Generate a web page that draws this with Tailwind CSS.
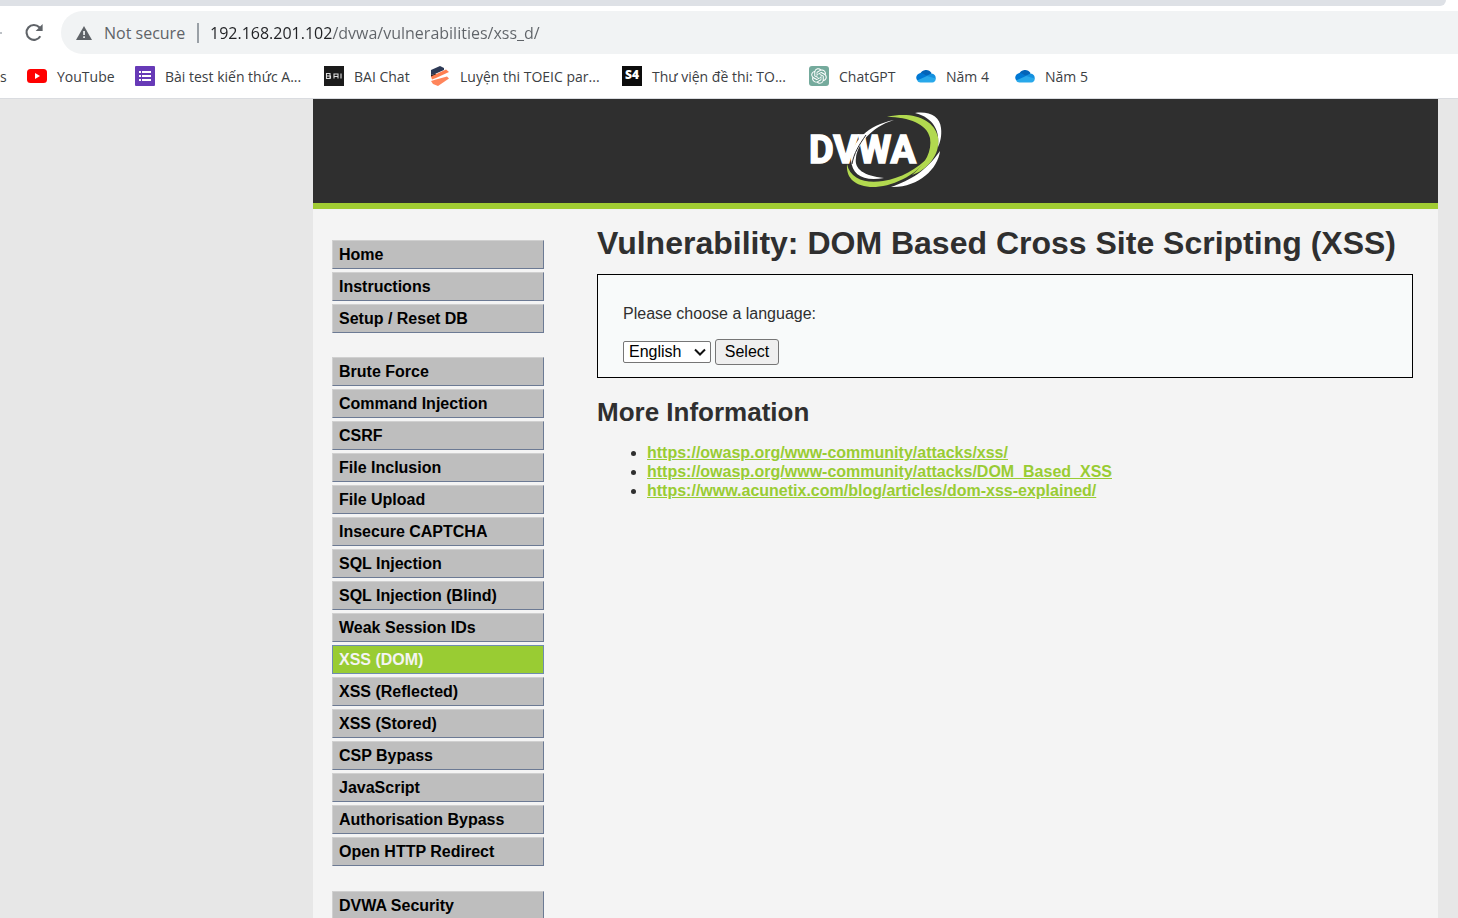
<!DOCTYPE html>
<html lang="en">
<head>
<meta charset="utf-8">
<title>Vulnerability: DOM Based Cross Site Scripting (XSS)</title>
<script src="https://cdn.jsdelivr.net/npm/@tailwindcss/browser@4"></script>
</head>
<body class="flex h-screen flex-col overflow-hidden bg-[#e7e7e7] font-['Liberation_Sans',Arial,sans-serif] text-base text-[#2f2f2f]">

<!-- Browser toolbar -->
<div class="shrink-0 border-b border-[#dadce0] bg-white font-['Open_Sans','Noto_Sans',sans-serif]">
  <div class="mr-3 h-[6px] rounded-br-lg bg-[#dee1e6]"></div>
  <div class="mt-[5px] flex h-[43px] items-center">
    <div class="flex w-[61px] shrink-0 items-center">
      <span class="h-[2px] w-[2px] bg-[#bdc1c6]"></span>
      <button aria-label="Reload" class="ml-[20px] h-6 w-6">
        <svg viewBox="0 0 24 24" class="h-6 w-6"><path d="M18.3 15.2A7.4 7.4 0 1 1 17.3 6.3L19 8" fill="none" stroke="#5f6368" stroke-width="2.1"/><path d="M20.6 3.1V10h-7z" fill="#5f6368"/></svg>
      </button>
    </div>
    <div class="flex h-full flex-1 items-center rounded-l-full bg-[#f1f3f4] pl-[15px]">
      <svg viewBox="0 0 16 14" class="h-[14px] w-4 shrink-0"><path d="M8 0L16 14H0Z" fill="#5f6368"/><path d="M7.2 5h1.7v4H7.2zM7.2 10.300h1.700v1.700H7.200z" fill="#f1f3f4"/></svg>
      <span class="ml-[12px] w-[84px] shrink-0 whitespace-nowrap text-[16px] text-[#5f6368]">Not secure</span>
      <span class="ml-[9px] h-5 w-[2px] shrink-0 bg-[#9aa0a6]"></span>
      <input aria-label="Address" type="text" value="192.168.201.102/dvwa/vulnerabilities/xss_d/" class="ml-[11px] h-8 min-w-0 flex-1 bg-[linear-gradient(90deg,#202124_123px,#5f6368_123px)] bg-clip-text text-[16px] text-transparent outline-none">
    </div>
  </div>
  <nav aria-label="Bookmarks" class="grid h-[44px] grid-cols-[27px_108px_189px_106px_192px_187px_107px_99px_auto] items-center whitespace-nowrap text-[14px] text-[#3c4043]">
    <a href="#">s</a>
    <a href="#" class="flex items-center gap-[10px]"><svg viewBox="0 0 20 20" class="h-5 w-5"><rect y="3" width="20" height="14" rx="3.500" fill="#f00"/><path d="M8 7v6l5-3z" fill="#fff"/></svg>YouTube</a>
    <a href="#" class="flex items-center gap-[10px]"><svg viewBox="0 0 20 20" class="h-5 w-5"><rect width="20" height="20" rx="1" fill="#673ab7"/><path d="M4 5h2v2H4zM7 5h9v2H7zM4 9h2v2H4zM7 9h9v2H7zM4 13h2v2H4zM7 13h9v2H7z" fill="#fff"/></svg>Bài test kiến thức A...</a>
    <a href="#" class="flex items-center gap-[10px]"><svg viewBox="0 0 20 20" class="h-5 w-5"><rect width="20" height="20" fill="#1b1b1b"/><path d="M2.500 7.500h3.500v5H2.500zM2.500 10h4v2.500M10 12.500v-4.500h4v4.500M10 10.500h4M17 7.500v5" fill="none" stroke="#ddd" stroke-width="1.100"/></svg>BAI Chat</a>
    <a href="#" class="flex items-center gap-[10px]"><svg viewBox="0 0 20 20" class="h-5 w-5"><path d="M1 4L10 0L14 2V4L6 7.500L1 9Z" fill="#2d3a56"/><path d="M1 9L6 7.500V10L1 11Z" fill="#26202b"/><path d="M1 10.500L16 3.500L19 6L6 12L2 13.500Z" fill="#ff7f50"/><path d="M1 15L6 13.500L17 10.500L19 12.500L8 20L3 18Z" fill="#ff855b"/></svg>Luyện thi TOEIC par...</a>
    <a href="#" class="flex items-center gap-[10px]"><svg viewBox="0 0 20 20" class="h-5 w-5"><rect width="20" height="20" fill="#0c0c0c"/><text x="10" y="13" text-anchor="middle" font-family="Open Sans" font-weight="800" font-size="12" fill="#fff">S4</text></svg>Thư viện đề thi: TO...</a>
    <a href="#" class="flex items-center gap-[10px]"><svg viewBox="0 0 20 20" class="h-5 w-5"><rect width="20" height="20" rx="3" fill="#74aa9c"/><path transform="translate(2.200 2.200) scale(.65)" fill="#fff" d="M22.282 9.821a5.985 5.985 0 0 0-.516-4.910 6.046 6.046 0 0 0-6.510-2.900A6.065 6.065 0 0 0 4.981 4.182a5.985 5.985 0 0 0-3.998 2.900 6.046 6.046 0 0 0 .743 7.097 5.980 5.980 0 0 0 .511 4.911 6.051 6.051 0 0 0 6.515 2.900A5.985 5.985 0 0 0 13.260 24a6.056 6.056 0 0 0 5.772-4.206 5.990 5.990 0 0 0 3.998-2.900 6.056 6.056 0 0 0-.748-7.073zM13.260 22.430a4.476 4.476 0 0 1-2.876-1.041l.141-.081 4.779-2.758a.795.795 0 0 0 .393-.681v-6.737l2.020 1.169a.071.071 0 0 1 .038.052v5.583a4.504 4.504 0 0 1-4.495 4.494zM3.600 18.304a4.471 4.471 0 0 1-.535-3.014l.142.085 4.783 2.759a.771.771 0 0 0 .781 0l5.843-3.369v2.332a.080.080 0 0 1-.033.062L9.740 19.950a4.499 4.499 0 0 1-6.140-1.646zM2.341 7.896a4.485 4.485 0 0 1 2.366-1.973V11.600a.766.766 0 0 0 .388.677l5.815 3.354-2.020 1.169a.076.076 0 0 1-.071 0l-4.830-2.787A4.504 4.504 0 0 1 2.341 7.896zm16.597 3.856l-5.833-3.387L15.119 7.200a.076.076 0 0 1 .071 0l4.830 2.791a4.494 4.494 0 0 1-.676 8.105v-5.678a.790.790 0 0 0-.406-.666zm2.010-3.023l-.141-.085-4.774-2.782a.776.776 0 0 0-.785 0L9.409 9.230V6.897a.066.066 0 0 1 .028-.061l4.830-2.787a4.499 4.499 0 0 1 6.681 4.660zM8.307 12.863l-2.020-1.164a.080.080 0 0 1-.038-.057V6.074a4.499 4.499 0 0 1 7.376-3.453l-.142.080-4.778 2.758a.795.795 0 0 0-.393.682zm1.097-2.366l2.602-1.499 2.607 1.500v2.999l-2.597 1.500-2.607-1.500z"/></svg>ChatGPT</a>
    <a href="#" class="flex items-center gap-[10px]"><svg viewBox="0 0 20 20" class="h-5 w-5"><path d="M4 8A6.500 6.500 0 0 1 15.500 7L13 12L6 13Z" fill="#0364b8"/><path d="M1 14A4.600 4.600 0 0 1 7 7.500L14 12L6 16Z" fill="#0078d4"/><path d="M10 10L15.500 7.500A4.300 4.300 0 0 1 19.500 13L13 13Z" fill="#1490df"/><path d="M1 14.500L11 10L19.700 12.500A3.600 3.600 0 0 1 16.300 16.500H4.500A4 4 0 0 1 1 14.500Z" fill="#28a8ea"/></svg>Năm 4</a>
    <a href="#" class="flex items-center gap-[10px]"><svg viewBox="0 0 20 20" class="h-5 w-5"><path d="M4 8A6.500 6.500 0 0 1 15.500 7L13 12L6 13Z" fill="#0364b8"/><path d="M1 14A4.600 4.600 0 0 1 7 7.500L14 12L6 16Z" fill="#0078d4"/><path d="M10 10L15.500 7.500A4.300 4.300 0 0 1 19.500 13L13 13Z" fill="#1490df"/><path d="M1 14.500L11 10L19.700 12.500A3.600 3.600 0 0 1 16.300 16.500H4.500A4 4 0 0 1 1 14.500Z" fill="#28a8ea"/></svg>Năm 5</a>
  </nav>
</div>

<!-- Page -->
<div class="ml-[313px] mr-5 flex min-h-0 flex-1 flex-col bg-[#f4f4f4]">
  <header class="flex h-[110px] shrink-0 justify-center border-b-[6px] border-[#a1cc33] bg-[#2f2f2f] pt-3">
    <svg viewBox="0 0 132 78" class="h-[78px] w-[132px]" role="img" aria-label="DVWA">
      <path d="M105 2C120 0 130 6 131 17C132 25 130 32 128 36C130 20 124 7 105 2Z" fill="#fff"/>
      <path d="M77 6C102 0 124 8 128 26C131 45 115 60 102 64C116 52 122 40 120 27C117 13 99 6 77 6Z" fill="#b2d94f"/>
      <path d="M84 9C61 16 47 34 46 47C44 58 54 65 74 67C54 71 42 64 41 49C41 31 58 14 84 9Z" fill="#fff"/>
      <path d="M37 53C40 68 56 73 73 70C91 67 106 59 121 44C105 67 78 77 60 76C43 74 36 66 37 53Z" fill="#b2d94f"/>
      <path d="M130 40C128 58 108 77 81 76C101 69 116 60 130 40Z" fill="#fff"/>
      <text x="-1" y="52" font-family="Roboto, Liberation Sans" font-weight="700" font-size="38" fill="#fff" stroke="#fff" stroke-width="1.500">DVWA</text>
      <path d="M56 24C49 34 44 42 42 53" fill="none" stroke="#2f2f2f" stroke-width="1"/>
    </svg>
  </header>

  <div class="flex min-h-0 flex-1">
    <nav aria-label="Main menu" class="ml-[19px] mt-[31px] w-[212px] shrink-0 font-bold text-black [&_a]:block [&_a]:h-[29px] [&_a]:border [&_a]:pl-[6px] [&_a]:leading-[27px] [&_a:not([aria-current])]:border-t-[#d0d0d0] [&_a:not([aria-current])]:border-l-[#d0d0d0] [&_a:not([aria-current])]:border-r-[#6c7a94] [&_a:not([aria-current])]:border-b-[#6c7a94] [&_a:not([aria-current])]:bg-[#bebebe]">
      <ul class="mb-6 flex flex-col gap-[3px]">
        <li><a href="#">Home</a></li>
        <li><a href="#">Instructions</a></li>
        <li><a href="#">Setup / Reset DB</a></li>
      </ul>
      <ul class="mb-[25px] flex flex-col gap-[3px]">
        <li><a href="#">Brute Force</a></li>
        <li><a href="#">Command Injection</a></li>
        <li><a href="#">CSRF</a></li>
        <li><a href="#">File Inclusion</a></li>
        <li><a href="#">File Upload</a></li>
        <li><a href="#">Insecure CAPTCHA</a></li>
        <li><a href="#">SQL Injection</a></li>
        <li><a href="#">SQL Injection (Blind)</a></li>
        <li><a href="#">Weak Session IDs</a></li>
        <li><a href="#" aria-current="page" class="border-[#6f8cae] bg-[#99cc33] text-[#f4f4f4]">XSS (DOM)</a></li>
        <li><a href="#">XSS (Reflected)</a></li>
        <li><a href="#">XSS (Stored)</a></li>
        <li><a href="#">CSP Bypass</a></li>
        <li><a href="#">JavaScript</a></li>
        <li><a href="#">Authorisation Bypass</a></li>
        <li><a href="#">Open HTTP Redirect</a></li>
      </ul>
      <ul>
        <li><a href="#">DVWA Security</a></li>
      </ul>
    </nav>

    <main class="ml-[53px] mr-[25px] min-w-0 flex-1 pt-[14px]">
      <h1 class="whitespace-nowrap text-[32px] font-bold leading-[40px]">Vulnerability: DOM Based Cross Site Scripting (XSS)</h1>
      <form class="mt-[11px] h-[104px] border border-black bg-[#f8fafa] px-[25px] pt-[29px]">
        <label for="lang" class="block w-fit leading-[20px]">Please choose a language:</label>
        <div class="mt-[15px] flex items-center gap-1">
          <div class="grid w-[88px] items-center">
            <select id="lang" class="col-start-1 row-start-1 h-[22px] appearance-none rounded-[2px] border border-[#767676] bg-white pl-[5px] leading-[20px] text-black"><option>English</option><option>French</option><option>Spanish</option><option>German</option></select>
            <svg viewBox="0 0 12 8" class="pointer-events-none col-start-1 row-start-1 mr-[5px] h-2 w-3 justify-self-end"><path d="M1 1.500L6 6.500L11 1.500" fill="none" stroke="#111" stroke-width="2"/></svg>
          </div>
          <button type="button" class="h-[26px] w-16 rounded-[3px] border border-[#767676] bg-[#efefef] leading-[24px] text-black">Select</button>
        </div>
      </form>
      <h2 class="mt-[18px] text-[26px] font-bold leading-[32px]">More Information</h2>
      <ul class="mt-[15px] list-disc pl-[50px] leading-[19px]">
        <li><a href="#" class="font-bold text-[#99cc33] underline">https://owasp.org/www-community/attacks/xss/</a></li>
        <li><a href="#" class="font-bold text-[#99cc33] underline">https://owasp.org/www-community/attacks/DOM_Based_XSS</a></li>
        <li><a href="#" class="font-bold text-[#99cc33] underline">https://www.acunetix.com/blog/articles/dom-xss-explained/</a></li>
      </ul>
    </main>
  </div>
</div>
</body>
</html>
